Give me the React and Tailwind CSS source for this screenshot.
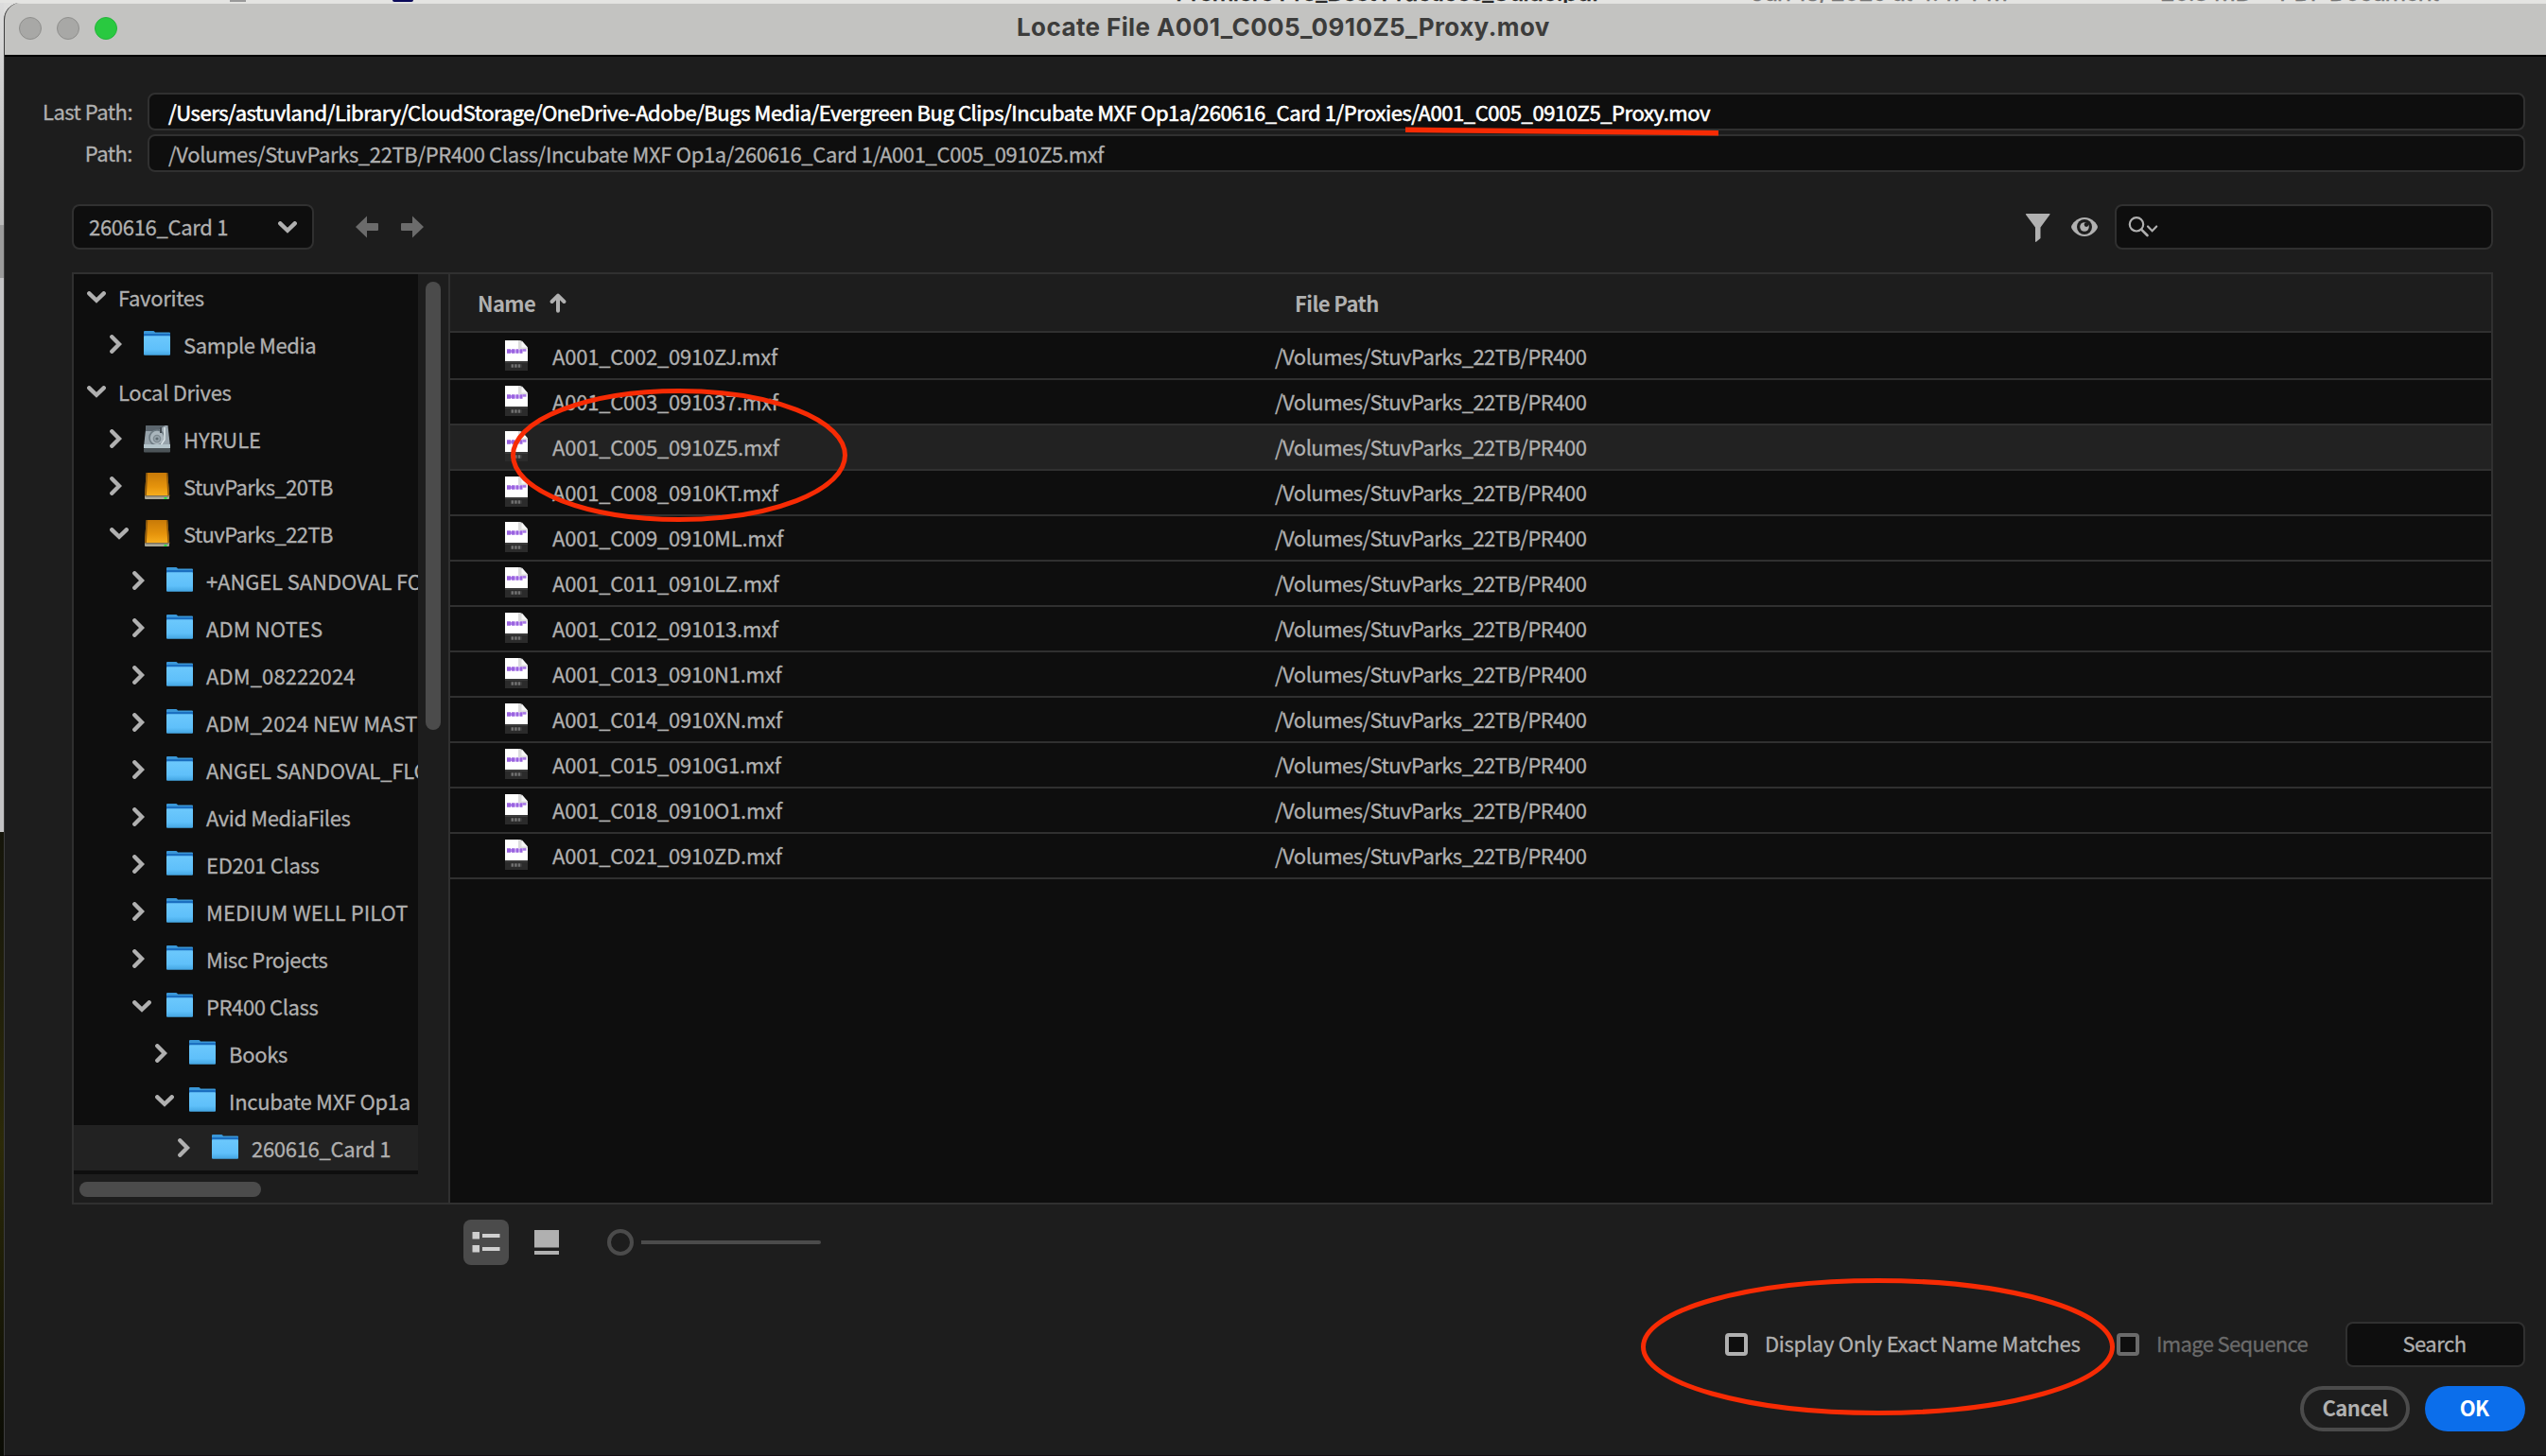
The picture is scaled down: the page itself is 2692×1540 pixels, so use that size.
const TREE = [
  { label: 'Favorites', level: 0, open: true },
  { label: 'Sample Media', level: 1, icon: 'folder', tracking: 'tracking-[-0.4px]' },
  { label: 'Local Drives', level: 0, open: true },
  { label: 'HYRULE', level: 1, icon: 'disk', tracking: 'tracking-[-0.1px]' },
  { label: 'StuvParks_20TB', level: 1, icon: 'drive', tracking: 'tracking-[-0.6px]' },
  { label: 'StuvParks_22TB', level: 1, icon: 'drive', tracking: 'tracking-[-0.6px]', open: true },
  { label: '+ANGEL SANDOVAL FOLDER', level: 2, icon: 'folder', tracking: 'tracking-[-0.1px]' },
  { label: 'ADM NOTES', level: 2, icon: 'folder', tracking: 'tracking-[0.1px]' },
  { label: 'ADM_08222024', level: 2, icon: 'folder', tracking: 'tracking-[0.1px]' },
  { label: 'ADM_2024 NEW MASTERS', level: 2, icon: 'folder', tracking: 'tracking-[0.05px]' },
  { label: 'ANGEL SANDOVAL_FLORES', level: 2, icon: 'folder', tracking: 'tracking-[-0.1px]' },
  { label: 'Avid MediaFiles', level: 2, icon: 'folder', tracking: 'tracking-[-0.4px]' },
  { label: 'ED201 Class', level: 2, icon: 'folder' },
  { label: 'MEDIUM WELL PILOT', level: 2, icon: 'folder', tracking: 'tracking-[0.05px]' },
  { label: 'Misc Projects', level: 2, icon: 'folder', tracking: 'tracking-[-0.4px]' },
  { label: 'PR400 Class', level: 2, icon: 'folder', tracking: 'tracking-[-0.4px]', open: true },
  { label: 'Books', level: 3, icon: 'folder' },
  { label: 'Incubate MXF Op1a', level: 3, icon: 'folder', open: true },
  { label: '260616_Card 1', level: 4, icon: 'folder', selected: true },
]

const FILES = [
  'A001_C002_0910ZJ.mxf',
  'A001_C003_091037.mxf',
  'A001_C005_0910Z5.mxf',
  'A001_C008_0910KT.mxf',
  'A001_C009_0910ML.mxf',
  'A001_C011_0910LZ.mxf',
  'A001_C012_091013.mxf',
  'A001_C013_0910N1.mxf',
  'A001_C014_0910XN.mxf',
  'A001_C015_0910G1.mxf',
  'A001_C018_0910O1.mxf',
  'A001_C021_0910ZD.mxf',
]

const INDENT = ['pl-[14px]', 'pl-[38px]', 'pl-[62px]', 'pl-[86px]', 'pl-[110px]']

function ChevronDown() {
  return (
    <svg width="20" height="13" viewBox="0 0 20 13" className="shrink-0">
      <path d="M2.3 2.3 L10 9.8 L17.7 2.3" fill="none" stroke="#b0b0b0" strokeWidth="4.4" strokeLinecap="round" />
    </svg>
  )
}

function ChevronRight() {
  return (
    <svg width="13" height="20" viewBox="0 0 13 20" className="shrink-0">
      <path d="M2.3 2.3 L10 10 L2.3 17.7" fill="none" stroke="#b0b0b0" strokeWidth="4.4" strokeLinecap="round" />
    </svg>
  )
}

function FolderIcon() {
  return (
    <svg width="28" height="30" viewBox="0 0 28 30" className="shrink-0">
      <defs>
        <linearGradient id="folder" x1="0" y1="0" x2="0" y2="1">
          <stop offset="0" stopColor="#6cc8fc" />
          <stop offset="0.7" stopColor="#5fc0fa" />
          <stop offset="1" stopColor="#43a5e2" />
        </linearGradient>
      </defs>
      <path d="M0 2 q0 -1 1 -1 h9 q1 0 2 1.4 h15 q1 0 1 1 v5 h-28 z" fill="#3a97d8" />
      <rect x="0" y="4" width="28" height="3" fill="#1b6fc0" />
      <rect x="0" y="6.2" width="28" height="20.6" rx="1" fill="url(#folder)" />
    </svg>
  )
}

function DiskIcon() {
  return (
    <svg width="28" height="30" viewBox="0 0 28 30" className="shrink-0">
      <path d="M2.5 1 h23 l2.5 23 h-28 z" fill="#97a3ab" />
      <path d="M2.5 1 h20 l-8 6 h-12.5 z" fill="#5c666e" />
      <circle cx="14" cy="14" r="8" fill="#aab6bd" stroke="#6d7a82" strokeWidth="1.6" />
      <circle cx="14" cy="15" r="3.6" fill="#98a5ac" stroke="#7d8990" strokeWidth="1.4" />
      <circle cx="14" cy="15" r="1.6" fill="#5f6b72" />
      <path d="M22 3 v13 l-4 6" fill="none" stroke="#dce6ea" strokeWidth="1.6" />
      <path d="M18 3 v6" stroke="#434b52" strokeWidth="2" />
      <rect x="0" y="21" width="28" height="4" fill="#b4c4ca" />
      <rect x="0" y="25" width="28" height="4.5" rx="1" fill="#4c5458" />
    </svg>
  )
}

function DriveIcon() {
  return (
    <svg width="28" height="30" viewBox="0 -1 28 30" className="shrink-0">
      <defs>
        <linearGradient id="drive" x1="0" y1="0" x2="0" y2="1">
          <stop offset="0" stopColor="#c87a08" />
          <stop offset="0.6" stopColor="#e6940c" />
          <stop offset="1" stopColor="#f9b01e" />
        </linearGradient>
      </defs>
      <path d="M2.6 0 h22.6 l2 25 h-26.2 z" fill="url(#drive)" />
      <path d="M2.6 0 l-1.6 25 h1.8 l1.4 -25 z M25.2 0 l2 25 h-1.8 l-1.6 -25 z" fill="#8f5a0c" />
      <rect x="1" y="24" width="26" height="4" rx="1" fill="#a9a798" />
      <rect x="1.5" y="24" width="25" height="1.4" fill="#7c705a" />
      <rect x="21.5" y="26" width="3" height="1.8" fill="#1fe03a" />
    </svg>
  )
}

function NodeIcon({ type }) {
  if (type === 'folder') return <FolderIcon />
  if (type === 'disk') return <DiskIcon />
  return <DriveIcon />
}

function ClipIcon() {
  return (
    <svg width="24" height="32" viewBox="0 0 24 32" className="shrink-0">
      <path d="M0 0 h16 l8 8 v14 h-24 z" fill="#fff" />
      <path d="M14 0 l2 0 l8 8 v1 h-10 z" fill="#dcdcdc" />
      <path d="M17.5 0 l6.5 7.5 h-6.5 z" fill="#f7f7f7" />
      <path d="M2 11.5 h4 M7 11.5 h3.5 M11.5 11.5 h3 M15.5 11.5 h3" stroke="#9a63e0" strokeWidth="4.6" />
      <path d="M18.5 10.4 h4" stroke="#a878e6" strokeWidth="2.6" />
      <path d="M6 11.5 h1 M10.5 11.5 h1 M14.5 11.5 h1" stroke="#b48aec" strokeWidth="3" />
      <rect y="22" width="24" height="10" fill="#2b2b2b" />
      <rect y="22" width="24" height="2" fill="#3a3a3a" />
      <path d="M6.5 27 h11" stroke="#707070" strokeWidth="3.4" strokeDasharray="2.6 1" />
    </svg>
  )
}

function TreeRow({ node }) {
  return (
    <div className="h-[50px] shrink-0">
      <div className={`flex items-center h-12 ${INDENT[node.level]} ${node.selected ? 'bg-[#222222]' : ''}`}>
        <span className={`flex shrink-0 ${node.level === 0 ? 'w-[33px]' : 'w-9'}`}>
          {node.open ? <ChevronDown /> : <ChevronRight />}
        </span>
        {node.icon && (
          <span className="flex w-[42px] shrink-0">
            <NodeIcon type={node.icon} />
          </span>
        )}
        <span className={`pt-[1px] whitespace-nowrap ${node.tracking || ''}`}>{node.label}</span>
      </div>
    </div>
  )
}

function FileRow({ name, selected }) {
  return (
    <div className={`flex items-center h-12 border-b-2 border-[#303030] pl-[58px] ${selected ? 'bg-[#222222]' : ''}`}>
      <span className="flex w-[50px] -mt-[2px]"><ClipIcon /></span>
      <span className="w-[764px] -mt-[2px] tracking-[-0.22px]">{name}</span>
      <span className="-mt-[2px] tracking-[-0.53px]">/Volumes/StuvParks_22TB/PR400</span>
    </div>
  )
}

function PathField({ label, value, bright }) {
  return (
    <div className="flex h-10">
      <div className="w-[135px] text-right leading-[39px] tracking-[-0.5px]">{label}</div>
      <div className={`ml-[16px] flex-1 rounded-lg border-2 border-[#303030] bg-[#0e0e0e] pl-5 leading-[36px] whitespace-nowrap ${
        bright ? 'text-white tracking-[-0.43px] [-webkit-text-stroke:0.6px_white]' : 'tracking-[-0.35px]'
      }`}>
        {value}
      </div>
    </div>
  )
}

// Finder window peeking out above the dialog
function BackgroundStrip() {
  return (
    <div className='flex h-[3px] shrink-0 overflow-hidden bg-[#e4e4e2] font-[Inter] text-[26px] font-medium text-[#2a2a2a]'>
      <div className="ml-[243px] h-[2px] w-[17px] bg-[#9a9a9a]" />
      <div className="ml-[155px] h-[2px] w-[22px] rounded-b bg-[#0b0a5a]" />
      <div className="ml-[806px] w-[608px] -mt-[24px] leading-[32px] whitespace-nowrap tracking-[-1px]">Premiere Pro_Best Practices_Guide.pdf</div>
      <div className="w-[433px] -mt-[24px] leading-[32px] whitespace-nowrap font-normal tracking-[-1.2px] text-[#777]">Jun 18, 2025 at 4:47 PM</div>
      <div className="w-[126px] -mt-[24px] leading-[32px] whitespace-nowrap font-normal tracking-[-1px] text-[#777]">20.3 MB</div>
      <div className="-mt-[24px] leading-[32px] whitespace-nowrap font-normal tracking-[-1.4px] text-[#777]">PDF Document</div>
    </div>
  )
}

function Markup() {
  return (
    <svg width="2692" height="1540" viewBox="0 0 2692 1540" className="pointer-events-none absolute left-0 top-0" fill="none" stroke="#f72b04">
      <path d="M1486 137.3 L1817 140.7" strokeWidth="5.6" />
      <ellipse cx="718" cy="481.5" rx="175.5" ry="68" strokeWidth="5" />
      <ellipse cx="1985.5" cy="1424.5" rx="248" ry="70" strokeWidth="5" />
    </svg>
  )
}

export default function App() {
  return (
    <div className='relative flex h-[1540px] w-[2692px] flex-col overflow-hidden bg-[#dededd] font-["Noto_Sans_CJK_SC","Noto_Sans",sans-serif] text-[22px] tracking-[-0.3px] text-[#b0b0b0] [-webkit-text-stroke:0.3px]'>
      <BackgroundStrip />
      <div className="flex flex-1">
        {/* Desktop edge */}
        <div className="flex w-1 shrink-0 flex-col">
          <div className="h-[235px] bg-gradient-to-b from-[#dcdcdc] to-[#b9b9b9]" />
          <div className="h-[56px] bg-[#9b9b9b]" />
          <div className="h-[586px] bg-[#c3c3c5]" />
          <div className="flex-1 bg-gradient-to-b from-[#15150a] via-[#2c2a08] to-[#0a0b04]" />
        </div>

        <div className="flex flex-1 flex-col overflow-hidden rounded-tl-[18px] border-b border-l border-b-[#130a10] border-l-[#3c3c3c] bg-[#1d1d1d]">
          {/* Title bar */}
          <div className="flex h-[57px] shrink-0 items-center border-b-2 border-t border-b-black border-t-[#e0e0de] bg-[#c3c3c1]">
            <div className="flex w-[1070px] gap-4 pl-[15px] -mt-[2px]">
              <span className="h-6 w-6 rounded-full border border-[#8e8e8c] bg-[#a8a8a6]" />
              <span className="h-6 w-6 rounded-full border border-[#8e8e8c] bg-[#a8a8a6]" />
              <span className="h-6 w-6 rounded-full border border-[#24b53a] bg-[#29c940]" />
            </div>
            <h1 className='-mt-[5px] font-[Inter] text-[26px] font-bold tracking-[0.4px] text-[#3c3c3b] [-webkit-text-stroke:0px]'>Locate File A001_C005_0910Z5_Proxy.mov</h1>
          </div>

          {/* Paths */}
          <div className="mt-[38px] flex flex-col gap-1 pr-[22px]">
            <PathField
              label="Last Path:"
              value="/Users/astuvland/Library/CloudStorage/OneDrive-Adobe/Bugs Media/Evergreen Bug Clips/Incubate MXF Op1a/260616_Card 1/Proxies/A001_C005_0910Z5_Proxy.mov"
              bright
            />
            <PathField
              label="Path:"
              value="/Volumes/StuvParks_22TB/PR400 Class/Incubate MXF Op1a/260616_Card 1/A001_C005_0910Z5.mxf"
            />
          </div>

          {/* Toolbar */}
          <div className="mt-[34px] flex h-12 items-center pl-[71px] pr-14">
            <div className="flex h-12 w-64 items-center justify-between rounded-lg border-2 border-[#303030] bg-[#0e0e0e] pl-4 pr-4">
              <span className="-mt-[1px]">260616_Card 1</span>
              <ChevronDown />
            </div>
            <svg width="24" height="24" viewBox="0 0 24 24" className="ml-11" fill="#6b6b6b">
              <path d="M0 12 L12 0.5 V8 H23 q1 0 1 1 V15 q0 1 -1 1 H12 V23.5 Z" />
            </svg>
            <svg width="24" height="24" viewBox="0 0 24 24" className="ml-6" fill="#6b6b6b">
              <path d="M24 12 L12 0.5 V8 H1 q-1 0 -1 1 V15 q0 1 1 1 H12 V23.5 Z" />
            </svg>
            <div className="ml-auto flex items-center">
              <svg width="28" height="30" viewBox="0 0 28 30" className="mt-[2px]" fill="#b0b0b0">
                <path d="M1.5 0 H26 q1 0 .4 1 L16.5 14.5 V26 L12 29.8 q-1 .4 -1 -.6 V14.5 L1 1 q-.5 -1 .5 -1 Z" />
              </svg>
              <svg width="28" height="22" viewBox="0 0 28 22" className="ml-[21px]" fill="#b0b0b0">
                <path d="M14 1 C6.5 1 0.5 7.5 0 11 C0.5 14.5 6.5 21 14 21 C21.5 21 27.5 14.5 28 11 C27.5 7.5 21.5 1 14 1 Z" />
                <circle cx="14" cy="11" r="8" fill="#1d1d1d" />
                <circle cx="14" cy="11" r="4.8" />
                <circle cx="16" cy="8.6" r="2.3" fill="#1d1d1d" />
              </svg>
              <div className="ml-[18px] flex h-12 w-[400px] items-center rounded-lg border-2 border-[#303030] bg-[#0e0e0e] pl-[12px]">
                <svg width="34" height="24" viewBox="0 0 34 24" fill="none" stroke="#b0b0b0" strokeLinecap="round">
                  <circle cx="9" cy="9.3" r="7.2" strokeWidth="2.2" />
                  <path d="M14.3 14.8 L20.5 21" strokeWidth="2.6" />
                  <path d="M21 11.5 L25.6 16.2 L30.2 11.5" strokeWidth="2.2" />
                </svg>
              </div>
            </div>
          </div>

          {/* Browser */}
          <div className="ml-[71px] mt-6 flex h-[986px] w-[2560px] shrink-0 border-2 border-[#303030]">
            <div className="flex w-[398px] shrink-0 border-r-2 border-[#303030]">
              <div className="flex w-[364px] flex-col">
                <div className="h-[952px] overflow-hidden bg-[#0e0e0e]">
                  {TREE.map(node => <TreeRow key={node.label} node={node} />)}
                </div>
                <div className="ml-[6px] mt-2 h-4 w-48 rounded-full bg-[#4b4b4b]" />
              </div>
              <div className="ml-2 mt-2 h-[474px] w-4 rounded-full bg-[#4b4b4b]" />
            </div>

            <div className="flex flex-1 flex-col bg-[#0e0e0e]">
              <div className="flex h-[62px] shrink-0 items-center border-b-2 border-[#303030] bg-[#1d1d1d] pl-[29px] font-bold tracking-[-0.6px] [-webkit-text-stroke:0px]">
                <span>Name</span>
                <svg width="18" height="21" viewBox="0 0 18 21" className="ml-[15px]" fill="none" stroke="#b0b0b0" strokeWidth="4" strokeLinecap="round" strokeLinejoin="round">
                  <path d="M9 18.7 V3 M2.6 9 L9 2.6 L15.4 9" />
                </svg>
                <span className="ml-[770px]">File Path</span>
              </div>
              <div className="pt-[2px]">
                {FILES.map(name => <FileRow key={name} name={name} selected={name === 'A001_C005_0910Z5.mxf'} />)}
              </div>
            </div>
          </div>

          {/* View controls */}
          <div className="ml-[485px] mt-4 flex h-12 items-center">
            <div className="flex h-12 w-12 items-center justify-center rounded-lg bg-[#4b4b4b]">
              <svg width="30" height="24" viewBox="0 0 30 24" fill="#d0d0d0">
                <path d="M0.5 1 h7.5 v7.5 h-7.5 z M0.5 15 h7.5 v7.5 h-7.5 z M11 3 h18.5 v4 h-18.5 z M11 17 h18.5 v4 h-18.5 z" />
              </svg>
            </div>
            <svg width="26" height="26" viewBox="0 0 26 26" className="ml-[27px]" fill="#b0b0b0">
              <path d="M0 0 h26 v18.5 h-26 z M0 22 h26 v4 h-26 z" />
            </svg>
            <div className="ml-[51px] h-7 w-7 rounded-full border-4 border-[#4b4b4b]" />
            <div className="ml-2 h-1 w-[190px] rounded-r bg-[#4b4b4b]" />
          </div>

          {/* Footer */}
          <div className="mt-[60px] flex h-12 items-center justify-end pr-[22px]">
            <span className="h-6 w-6 rounded border-4 border-[#b0b0b0] bg-[#0e0e0e]" />
            <span className="-mt-[3px] ml-[18px] w-[372px]">Display Only Exact Name Matches</span>
            <span className="h-6 w-6 rounded border-4 border-[#6b6b6b] bg-[#0e0e0e]" />
            <span className="-mt-[3px] ml-[18px] w-[200px] tracking-[-0.65px] text-[#6b6b6b]">Image Sequence</span>
            <button className="h-12 w-[190px] rounded-lg border-2 border-[#303030] bg-[#0e0e0e] pb-[3px] pr-[2px] tracking-[-0.5px]">Search</button>
          </div>
          <div className="mt-5 flex h-12 justify-end gap-4 pr-[22px] font-bold [-webkit-text-stroke:0px]">
            <button className="h-12 w-[116px] rounded-full border-4 border-[#4b4b4b] pb-[3px] tracking-[-0.5px]">Cancel</button>
            <button className="h-12 w-[106px] rounded-full bg-[#0b6eeb] pb-[3px] pr-[2px] tracking-[-0.8px] text-white">OK</button>
          </div>
        </div>
      </div>
      <Markup />
    </div>
  )
}
